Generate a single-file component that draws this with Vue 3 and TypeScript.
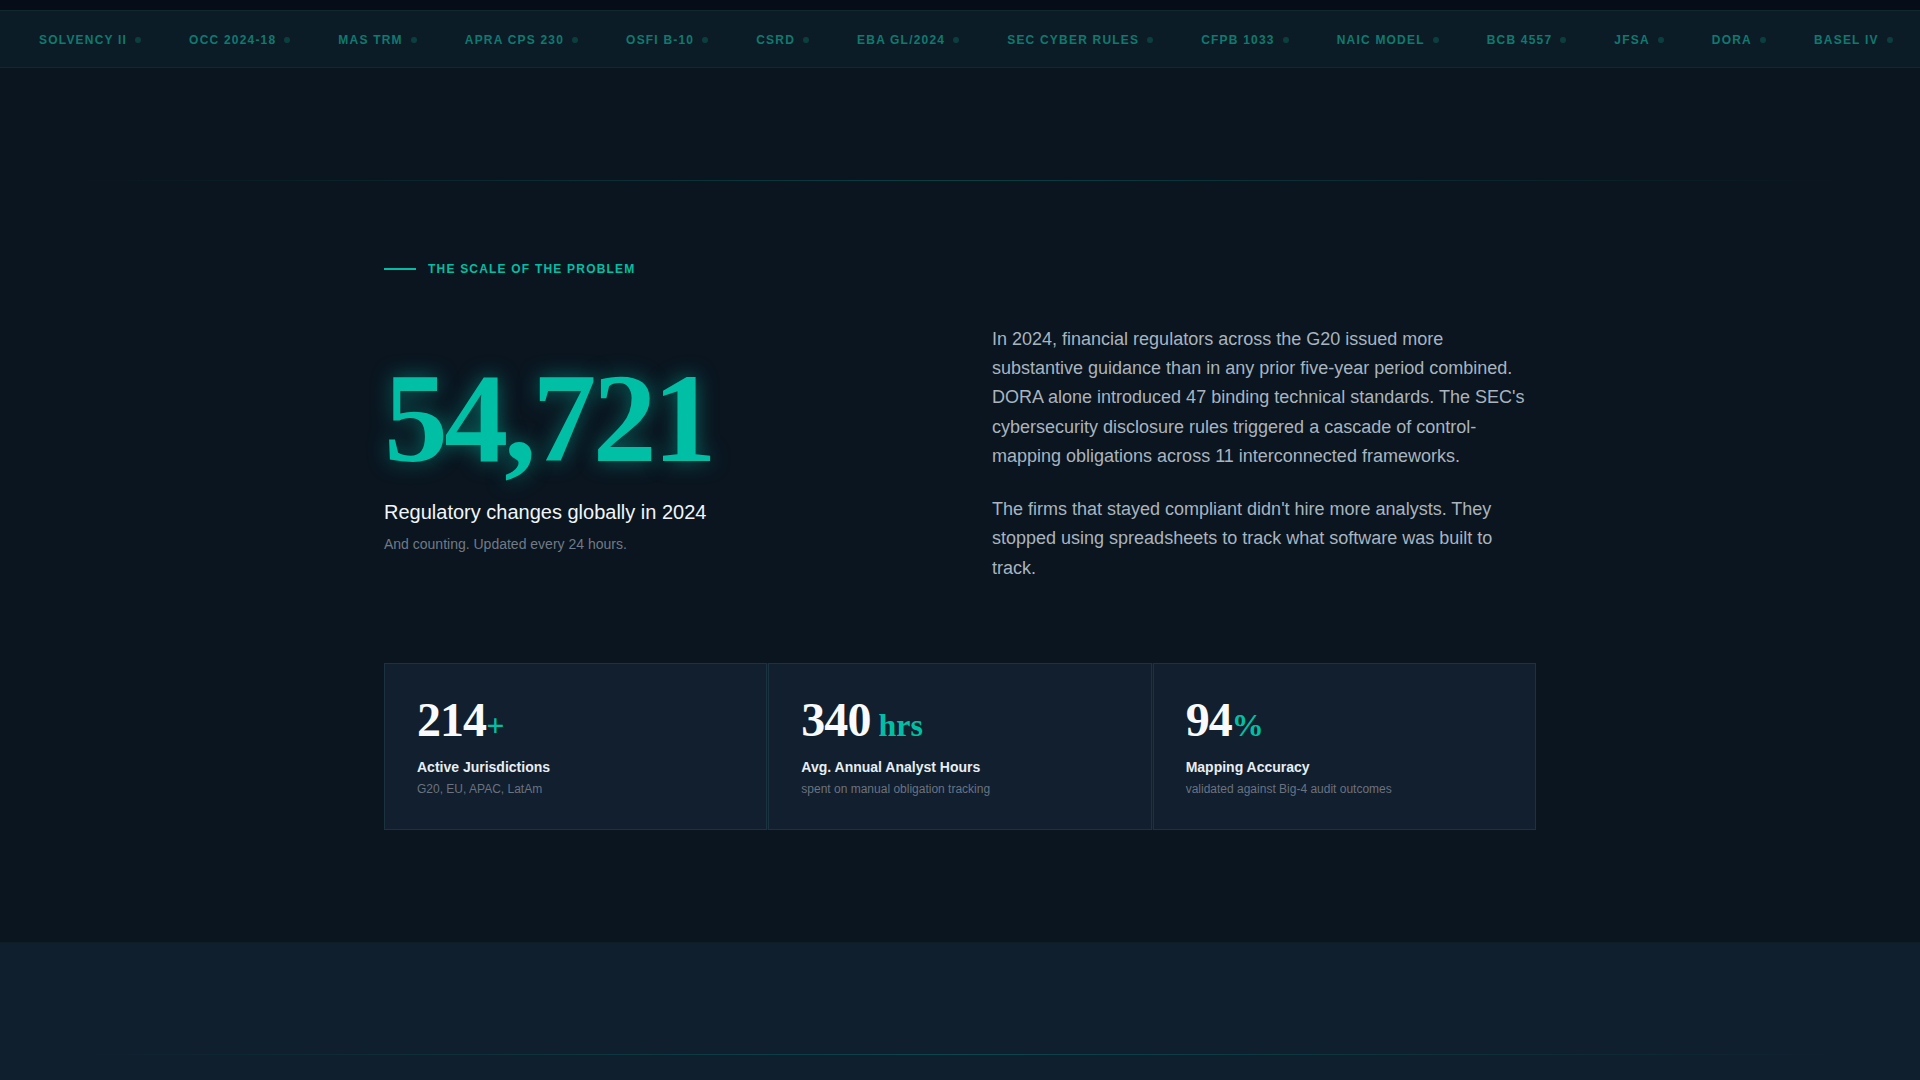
<template>
  <div class="page">
    <div class="top-strip"></div>
    <div class="ticker">
      <div v-for="t in tickerItems" :key="t" class="ticker-item">
        <span>{{ t }}</span>
        <i class="ticker-dot"></i>
      </div>
    </div>

    <section class="problem">
      <div class="divider"></div>
      <div class="container">
        <div class="eyebrow">
          <i class="eyebrow-line"></i>
          <span>THE SCALE OF THE PROBLEM</span>
        </div>

        <div class="hero-grid">
          <div class="hero-left">
            <div class="big-number">54,721</div>
            <div class="big-label">Regulatory changes globally in 2024</div>
            <div class="big-sub">And counting. Updated every 24 hours.</div>
          </div>
          <div class="hero-right">
            <p>
              In 2024, financial regulators across the G20 issued more substantive guidance than in any
              prior five-year period combined. DORA alone introduced 47 binding technical standards. The
              SEC's cybersecurity disclosure rules triggered a cascade of control-mapping obligations
              across 11 interconnected frameworks.
            </p>
            <p>
              The firms that stayed compliant didn't hire more analysts. They stopped using spreadsheets
              to track what software was built to track.
            </p>
          </div>
        </div>

        <div class="stats">
          <div v-for="s in stats" :key="s.label" class="stat-card">
            <div class="stat-value">{{ s.value }}<span class="stat-unit">{{ s.unit }}</span></div>
            <div class="stat-label">{{ s.label }}</div>
            <div class="stat-note">{{ s.note }}</div>
          </div>
        </div>
      </div>
    </section>

    <section class="next-section">
      <div class="divider"></div>
    </section>
  </div>
</template>

<script setup lang="ts">
const tickerItems: string[] = [
  'SOLVENCY II',
  'OCC 2024-18',
  'MAS TRM',
  'APRA CPS 230',
  'OSFI B-10',
  'CSRD',
  'EBA GL/2024',
  'SEC CYBER RULES',
  'CFPB 1033',
  'NAIC MODEL',
  'BCB 4557',
  'JFSA',
  'DORA',
  'BASEL IV',
];

const stats = [
  { value: '214', unit: '+', label: 'Active Jurisdictions', note: 'G20, EU, APAC, LatAm' },
  { value: '340', unit: ' hrs', label: 'Avg. Annual Analyst Hours', note: 'spent on manual obligation tracking' },
  { value: '94', unit: '%', label: 'Mapping Accuracy', note: 'validated against Big-4 audit outcomes' },
];
</script>

<style>
html,
body {
  margin: 0;
  background: #0a1520;
  overflow: hidden;
}
</style>

<style scoped>
.page {
  height: 1080px;
  overflow: hidden;
  font-family: "Liberation Sans", Arial, sans-serif;
  background: #0a1520;
}

.top-strip {
  height: 10px;
  background: #060d18;
}

.ticker {
  display: flex;
  align-items: center;
  gap: 48px;
  height: 58px;
  box-sizing: border-box;
  padding: 2px 0 0 39px;
  background: #0c1c26;
  border-top: 1px solid #10292f;
  border-bottom: 1px solid #10292f;
  white-space: nowrap;
  overflow: hidden;
}

.ticker-item {
  display: flex;
  align-items: center;
  gap: 8px;
  font-size: 12px;
  font-weight: 700;
  letter-spacing: 0.1em;
  color: #0e7a70;
}

.ticker-dot {
  width: 6px;
  height: 6px;
  border-radius: 50%;
  background: #0b3f3f;
}

.divider {
  height: 1px;
  background: linear-gradient(90deg, transparent 4%, rgba(0, 191, 165, 0.25), transparent 96%);
}

.problem {
  padding: 112px 0;
}

.container {
  width: 1152px;
  margin: 0 auto;
  padding-top: 80px;
}

.eyebrow {
  display: flex;
  align-items: center;
  gap: 12px;
  font-size: 12px;
  line-height: 16px;
  font-weight: 700;
  letter-spacing: 0.1em;
  color: #00bfa5;
}

.eyebrow-line {
  width: 32px;
  height: 2px;
  background: #00bfa5;
}

.hero-grid {
  display: grid;
  grid-template-columns: 1fr 1fr;
  gap: 64px;
  align-items: center;
  margin-top: 47.75px;
  margin-bottom: 80.25px;
}

.big-number {
  font-family: "Liberation Serif", "Times New Roman", serif;
  font-size: 128px;
  font-weight: 700;
  line-height: 1;
  letter-spacing: -0.03em;
  color: #00bfa5;
  text-shadow: 0 0 20px rgba(0, 191, 165, 0.5);
}

.big-label {
  margin-top: 16px;
  font-size: 20px;
  line-height: 28px;
  color: #f1f5f9;
}

.big-sub {
  margin-top: 8px;
  font-size: 14px;
  line-height: 20px;
  color: #717a86;
}

.hero-right p {
  margin: 0 0 24px;
  font-size: 18px;
  line-height: 1.625;
  color: #a9b4bf;
}

.hero-right p:last-child {
  margin-bottom: 0;
}

.stats {
  display: grid;
  grid-template-columns: repeat(3, 1fr);
  gap: 1px;
  background: #121f2d;
}

.stat-card {
  padding: 32px 32px 31px;
  background: #111f2e;
  border: 1px solid #1b3240;
}

.stat-value {
  font-family: "Liberation Serif", "Times New Roman", serif;
  font-size: 48px;
  font-weight: 700;
  line-height: 1;
  letter-spacing: -0.02em;
  color: #f8fafc;
  white-space: pre;
}

.stat-unit {
  font-size: 32px;
  letter-spacing: 0;
  color: #00bfa5;
}

.stat-label {
  margin-top: 13px;
  font-size: 14px;
  line-height: 20px;
  font-weight: 700;
  color: #e8edf2;
}

.stat-note {
  margin-top: 3px;
  font-size: 12px;
  line-height: 18px;
  color: #6b7280;
}

.next-section {
  height: 140px;
  padding-top: 111px;
  box-sizing: border-box;
  background: #0f1f2e;
  border-top: 1px solid #0f1d29;
}
</style>
